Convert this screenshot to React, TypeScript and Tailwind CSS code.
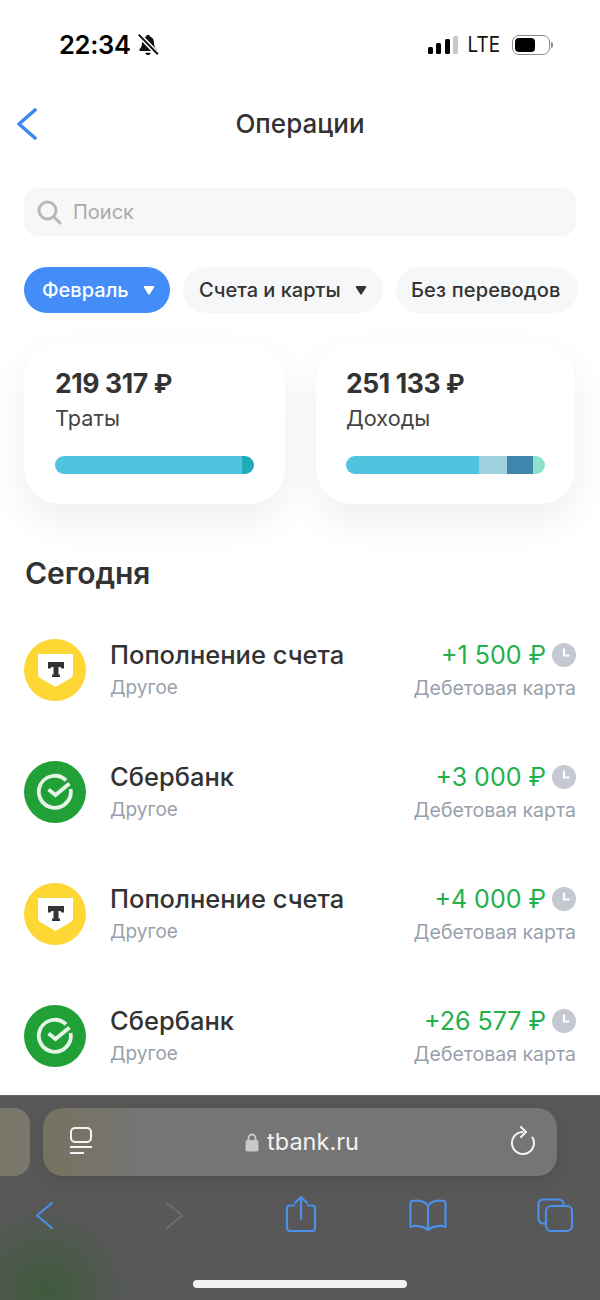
function StatusBar() {
  return (
    <div className="h-[88px] flex justify-between items-start pt-[29px] pl-[59px] pr-[47px] text-black">
      <div className="flex items-center gap-[6px] h-[32px]">
        <span className="text-[25.5px] leading-[32px] font-semibold tracking-[-0.3px]">22:34</span>
        <svg width="22" height="24" viewBox="0 0 20 22">
          <path d="M10 1.5c-1 0-1.6.7-1.7 1.6C5.6 3.9 4.5 6 4.5 8.5c0 3.5-.8 5-2.3 6.5v1.5h15.6V15c-1.5-1.5-2.3-3-2.3-6.5 0-2.5-1.1-4.6-3.8-5.4-.1-.9-.7-1.6-1.7-1.6z" fill="#111" />
          <path d="M7.5 18h5c-.3 1.3-1.2 2.2-2.5 2.2S7.8 19.3 7.5 18z" fill="#111" />
          <path d="M1.5 1.5 19 19.5" stroke="#fff" strokeWidth="4.5" />
          <path d="M1.5 1.5 19 19.5" stroke="#111" strokeWidth="1.8" />
        </svg>
      </div>
      <div className="flex items-center h-[32px]">
        <div className="flex items-end gap-[3.5px] h-[18px]">
          <div className="w-[5px] h-[7px] rounded-[1.5px] bg-black" />
          <div className="w-[5px] h-[11px] rounded-[1.5px] bg-black" />
          <div className="w-[5px] h-[15px] rounded-[1.5px] bg-black" />
          <div className="w-[5px] h-[18px] rounded-[1.5px] bg-[#c9c9c9]" />
        </div>
        <span className="ml-[8px] text-[21px] leading-[24px] text-[#111] w-[32px] scale-x-90">LTE</span>
        <div className="ml-[14px] w-[38px] h-[20px] rounded-[7px] border-[1.5px] border-[#8a8a8a] p-[2px]">
          <div className="w-[20px] h-full rounded-[4px] bg-black" />
        </div>
        <div className="w-[2px] h-[6px] ml-[1px] rounded-r-full bg-[#8a8a8a]" />
      </div>
    </div>
  );
}

function Chevron({ dir, color, w, h, sw }: { dir: "left" | "right"; color: string; w: number; h: number; sw: number }) {
  return (
    <svg width={w} height={h} viewBox={`0 0 ${w} ${h}`} fill="none">
      <path
        d={dir === "left" ? `M${w - 2} 2 L2 ${h / 2} L${w - 2} ${h - 2}` : `M2 2 L${w - 2} ${h / 2} L2 ${h - 2}`}
        stroke={color}
        strokeWidth={sw}
        strokeLinecap="round"
        strokeLinejoin="round"
      />
    </svg>
  );
}

function Caret({ color }: { color: string }) {
  return (
    <svg width="12" height="10" viewBox="0 0 12 10">
      <path d="M1.5 1h9a.8.8 0 0 1 .7 1.2l-4.5 7a.8.8 0 0 1-1.4 0l-4.5-7A.8.8 0 0 1 1.5 1z" fill={color} />
    </svg>
  );
}

function TinkoffIcon() {
  return (
    <div className="w-[62px] h-[62px] rounded-full bg-[#fdd835] flex items-center justify-center shrink-0">
      <svg width="35" height="33" viewBox="0 0 35 33">
        <path d="M0 0h35v20c0 2-1 3.5-3 4.5L17.5 33 3 24.5C1 23.5 0 22 0 20z" fill="#fff" />
        <path d="M10 8h16v6.5h-2.5l-1-1.5H20.5V20.5H22V23H14V20.5H15.5V13H13.5l-1 1.5H10z" fill="#333" />
      </svg>
    </div>
  );
}

function SberIcon() {
  return (
    <div className="w-[62px] h-[62px] rounded-full bg-[#21a038] flex items-center justify-center shrink-0">
      <svg width="40" height="40" viewBox="0 0 40 40" fill="none">
        <path d="M31 8.3A16 16 0 1 0 35.6 17" stroke="#e6f4e8" strokeWidth="3.8" />
        <path d="M13.5 17.5l7 5.5L34.5 11.5" stroke="#e6f4e8" strokeWidth="3.8" />
      </svg>
    </div>
  );
}

function ClockBadge() {
  return (
    <div className="w-[24px] h-[24px] rounded-full bg-[#c5c8d0] shrink-0">
      <svg width="24" height="24" viewBox="0 0 24 24" fill="none">
        <path d="M12 5.5V12.5H17.5" stroke="#fff" strokeWidth="2.2" />
      </svg>
    </div>
  );
}

function SummaryCard({ amount, label, className, children }: { amount: string; label: string; className: string; children: React.ReactNode }) {
  return (
    <div className={`h-[160px] rounded-[36px] bg-white shadow-[0_16px_40px_rgba(0,0,0,0.07)] pt-[24px] ${className}`}>
      <div className="text-[26.5px] leading-[30px] font-bold text-[#333] tracking-[-0.4px]">
        {amount} <span className="text-[25px]">₽</span>
      </div>
      <div className="text-[21.7px] leading-[26px] mt-[6px] text-[#444]">{label}</div>
      <div className="flex h-[18px] mt-[25px] rounded-full overflow-hidden w-[199px]">{children}</div>
    </div>
  );
}

const ops = [
  { title: "Пополнение счета", amount: "+1 500 ₽", bank: "t" },
  { title: "Сбербанк", amount: "+3 000 ₽", bank: "s" },
  { title: "Пополнение счета", amount: "+4 000 ₽", bank: "t" },
  { title: "Сбербанк", amount: "+26 577 ₽", bank: "s" },
];

function OperationRow({ title, amount, bank }: { title: string; amount: string; bank: string }) {
  return (
    <div className="flex items-center h-[62px]">
      {bank === "t" ? <TinkoffIcon /> : <SberIcon />}
      <div className="ml-[24px] flex-1">
        <div className="text-[25.5px] leading-[30px] font-medium text-[#333]">{title}</div>
        <div className="text-[19px] leading-[24px] mt-[6px] text-[#9aa0ab]">Другое</div>
      </div>
      <div className="flex flex-col items-end">
        <div className="flex items-center gap-[6px] h-[30px]">
          <span className="text-[25px] leading-[30px] text-[#22b04a]">{amount}</span>
          <ClockBadge />
        </div>
        <div className="text-[19.5px] leading-[24px] mt-[6px] text-[#9aa0ab]">Дебетовая карта</div>
      </div>
    </div>
  );
}

function SafariBar() {
  return (
    <div className="h-[205px] shrink-0 border-t border-[#666] bg-[radial-gradient(circle_at_45px_195px,#3f5a3c_0,#585858_85px)]">
      <div className="flex gap-[13px] pt-[12px] h-[80px]">
        <div className="w-[30px] h-[68px] rounded-r-[16px] bg-[#7a786a]" />
        <div className="w-[514px] h-[68px] rounded-[20px] bg-[linear-gradient(90deg,#77725f_0,#757575_20%)] shadow-[0_4px_16px_rgba(0,0,0,0.12)] flex items-center justify-between pl-[25px] pr-[21px]">
          <svg width="26" height="32" viewBox="0 0 26 32" fill="none" stroke="#f4f4f4" strokeWidth="2">
            <rect x="3" y="2" width="20" height="14" rx="4" />
            <path d="M2 21h22M2 27h14" />
          </svg>
          <div className="flex items-center gap-[8px]">
            <svg width="14" height="20" viewBox="0 0 14 20" fill="none">
              <path d="M3.5 9V6a3.5 3.5 0 0 1 7 0v3" stroke="#c8c8c8" strokeWidth="1.8" />
              <rect x="0.5" y="8" width="13" height="11.5" rx="2" fill="#c8c8c8" />
            </svg>
            <span className="text-[23.5px] leading-[30px] text-[#f2f2f2]">tbank.ru</span>
          </div>
          <svg width="26" height="32" viewBox="0 0 26 32" fill="none" stroke="#f4f4f4" strokeWidth="2" strokeLinecap="round" strokeLinejoin="round">
            <path d="M12.5 6A11 11 0 1 0 22.5 11.5" />
            <path d="M11 1l5 5-5 5" />
          </svg>
        </div>
      </div>
      <div className="flex items-center h-[78px] pl-[35px]">
        <Chevron dir="left" color="#4a8fe8" w={19} h={29} sw={2.2} />
        <div className="ml-[111px]">
          <Chevron dir="right" color="#6c6c6c" w={19} h={29} sw={2.2} />
        </div>
        <svg className="ml-[101px] -mt-[2px]" width="32" height="38" viewBox="0 0 32 38" fill="none" stroke="#4a8fe8" strokeWidth="2.2" strokeLinecap="round" strokeLinejoin="round">
          <path d="M9 10.5H5a3 3 0 0 0-3 3V33a3 3 0 0 0 3 3h22a3 3 0 0 0 3-3V13.5a3 3 0 0 0-3-3h-4" />
          <path d="M16 24V2M10 8l6-6 6 6" />
        </svg>
        <svg className="ml-[92px]" width="38" height="34" viewBox="0 0 38 34" fill="none" stroke="#4a8fe8" strokeWidth="2.2" strokeLinejoin="round">
          <path d="M19 8C16 3 10 2 3 3c-1 .2-1.5.8-1.5 2v24c4-1.5 12-2 17.5 3 5.5-5 13.5-4.5 17.5-3V5c0-1.2-.5-1.8-1.5-2-7-1-13 0-16 5z" />
          <path d="M19 8v24" />
        </svg>
        <svg className="ml-[90px]" width="36" height="34" viewBox="0 0 36 34" fill="none" stroke="#4a8fe8" strokeWidth="2.2">
          <rect x="9" y="8" width="26" height="25" rx="5" />
          <path d="M9 25.5H6a4.500 4.500 0 0 1-4.500-4.500V6A4.500 4.500 0 0 1 6 1.500h16A4.500 4.500 0 0 1 26.500 6v2" />
        </svg>
      </div>
      <div className="flex justify-center mt-[26px]">
        <div className="w-[214px] h-[8px] rounded-full bg-[#f0f0f0]" />
      </div>
    </div>
  );
}

export default function App() {
  return (
    <div className="w-[600px] h-[1300px] overflow-hidden flex flex-col bg-white font-['Inter',sans-serif]">
      <div className="flex-1 overflow-hidden">
        <StatusBar />
        {/* header */}
        <div className="relative h-[72px] flex items-center justify-center">
          <div className="absolute left-[17px] top-[20px]">
            <Chevron dir="left" color="#3f88ee" w={20} h={32} sw={3.6} />
          </div>
          <span className="text-[26px] leading-[30px] font-medium text-[#333]">Операции</span>
        </div>
        <div className="px-[24px] pt-[28px]">
          {/* search */}
          <div className="h-[48px] rounded-[14px] bg-[#f6f7f8] flex items-center pl-[12px]">
            <svg width="26" height="26" viewBox="0 0 26 26" fill="none" stroke="#b8b8b8" strokeWidth="3">
              <circle cx="11.5" cy="11.5" r="8.5" />
              <path d="M18 18l6 6" strokeLinecap="round" />
            </svg>
            <span className="ml-[11px] text-[20px] leading-[24px] text-[#a9a9a9]">Поиск</span>
          </div>
          {/* filters */}
          <div className="flex gap-[13px] mt-[31px] w-[560px]">
            <div className="w-[146px] h-[46px] rounded-full bg-[#448cf7] flex items-center pl-[18px] gap-[14px] text-white">
              <span className="text-[20px] leading-[24px] font-medium">Февраль</span>
              <Caret color="#fff" />
            </div>
            <div className="w-[200px] h-[46px] rounded-full bg-[#f6f7f8] flex items-center pl-[16px] gap-[14px]">
              <span className="text-[20px] leading-[24px] font-medium text-[#333]">Счета и карты</span>
              <Caret color="#333" />
            </div>
            <div className="w-[182px] h-[46px] rounded-full bg-[#f6f7f8] flex items-center pl-[15px]">
              <span className="text-[20px] leading-[24px] font-medium text-[#333] tracking-[0.15px] whitespace-nowrap">Без переводов</span>
            </div>
          </div>
          {/* cards */}
          <div className="flex justify-between mt-[31px] w-[551px]">
            <SummaryCard amount="219 317" label="Траты" className="w-[261px] pl-[31px]">
              <div className="w-[187px] bg-[#50c3df]" />
              <div className="flex-1 bg-[#1eacb8]" />
            </SummaryCard>
            <SummaryCard amount="251 133" label="Доходы" className="w-[259px] pl-[30px]">
              <div className="w-[133px] bg-[#50c3df]" />
              <div className="w-[28px] bg-[#9fd0de]" />
              <div className="w-[26px] bg-[#3f86ac]" />
              <div className="flex-1 bg-[#8fe0cc]" />
            </SummaryCard>
          </div>
          <div className="mt-[50px] ml-[1px] text-[30px] leading-[38px] font-semibold text-[#333] tracking-[-0.1px]">Сегодня</div>
          <div className="mt-[47px] flex flex-col gap-[60px] w-[552px]">
            {ops.map((op, i) => (
              <OperationRow key={i} title={op.title} amount={op.amount} bank={op.bank} />
            ))}
          </div>
        </div>
      </div>
      <SafariBar />
    </div>
  );
}
